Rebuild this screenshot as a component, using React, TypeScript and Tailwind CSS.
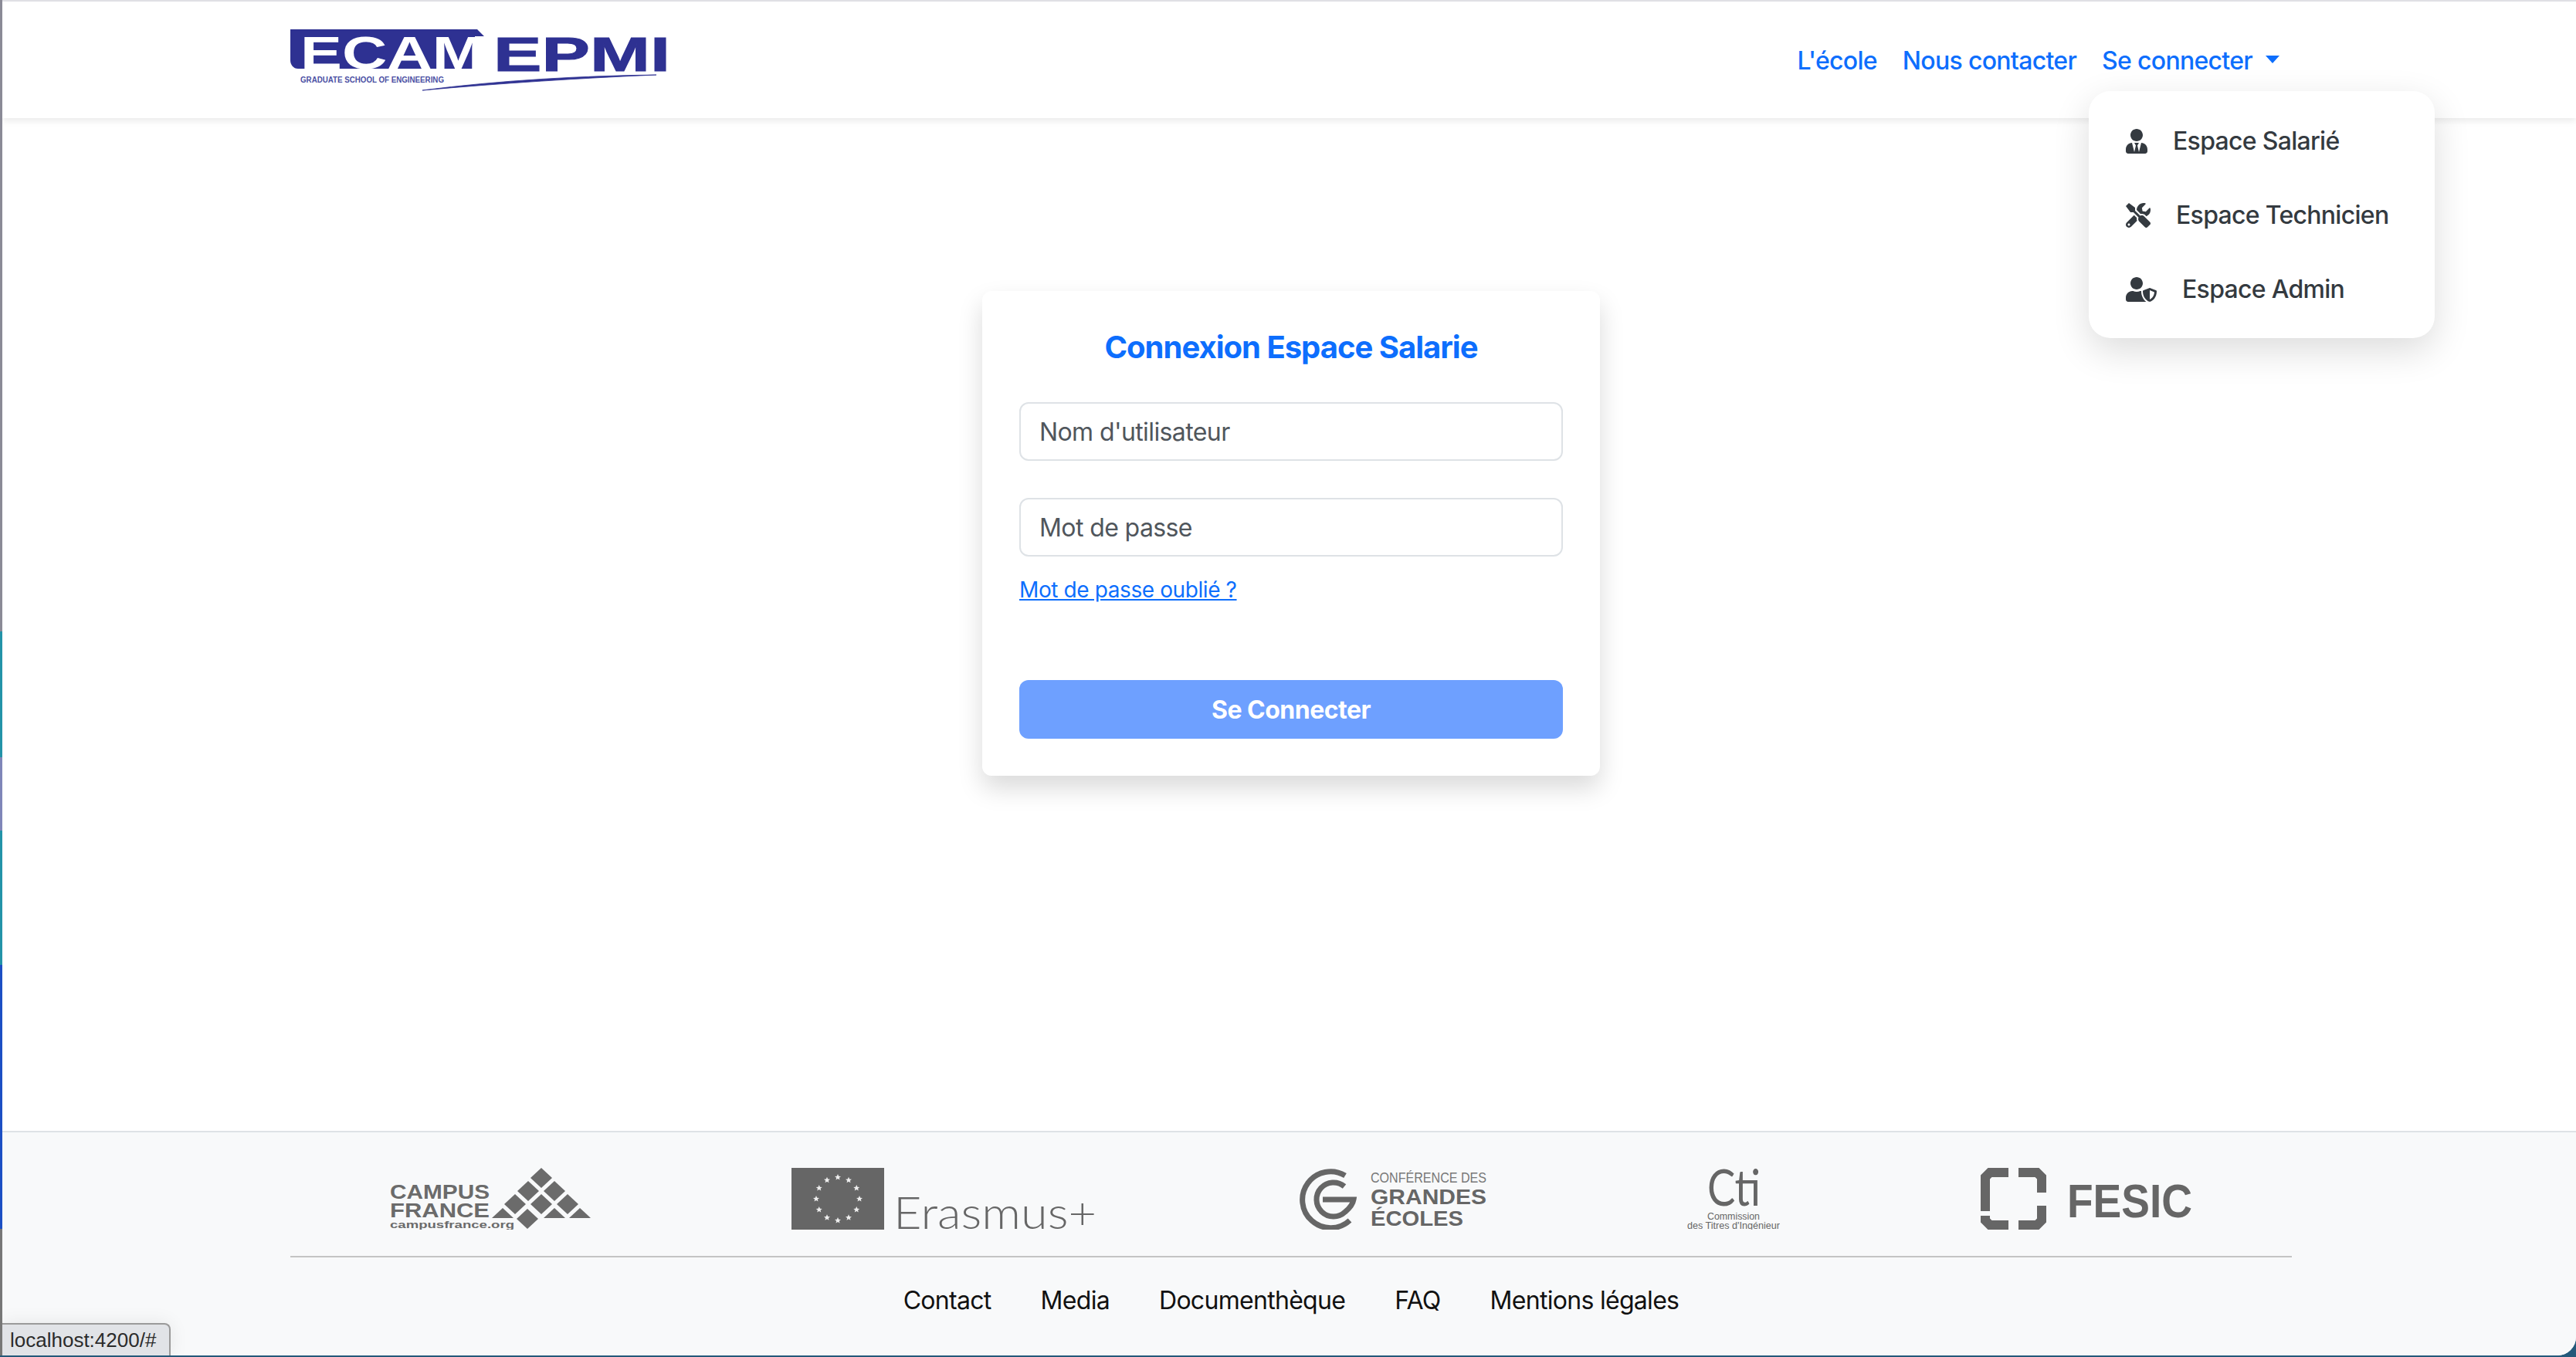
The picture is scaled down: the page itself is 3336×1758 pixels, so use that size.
import { FaTools, FaUserShield, FaUserTie } from 'react-icons/fa';

const menuItems = [
  { label: 'Espace Salarié', Icon: FaUserTie, iconClass: 'h-[32px] w-[28px]' },
  { label: 'Espace Technicien', Icon: FaTools, iconClass: 'h-[32px] w-[32px]' },
  { label: 'Espace Admin', Icon: FaUserShield, iconClass: 'h-[32px] w-[40px]' },
];

const footerLinks = ['Contact', 'Media', 'Documenthèque', 'FAQ', 'Mentions légales'];

function EcamLogo() {
  return (
    <svg width="490" height="82" viewBox="0 0 490 82" aria-label="ECAM EPMI">
      <path d="M0 0H242L251 9H239V51H10C4 51 0 46 0 40Z" fill="#2e3192" />
      <text x="13" y="51" fontFamily="Liberation Sans" fontWeight="700" fontSize="60" fill="#fff" textLength="238" lengthAdjust="spacingAndGlyphs">ECAM</text>
      <text x="263" y="54" fontFamily="Liberation Sans" fontWeight="700" fontSize="63" fill="#2e3192" stroke="#2e3192" strokeWidth="1" textLength="229" lengthAdjust="spacingAndGlyphs">EPMI</text>
      <text x="13" y="69" fontFamily="Liberation Sans" fontWeight="700" fontSize="10" fill="#4a4fa3" textLength="186" lengthAdjust="spacingAndGlyphs">GRADUATE SCHOOL OF ENGINEERING</text>
      <path d="M171 79C270 66 380 60 474 59C380 63 270 70 171 79Z" fill="#2e3192" stroke="#2e3192" strokeWidth="0.8" />
    </svg>
  );
}

function CampusFranceLogo() {
  const diamonds = [[196, 13], [179, 30], [213, 30], [162, 47], [196, 47], [230, 47], [178, 66]];
  const triangles = [[146, 52], [213, 52], [246, 52]];
  return (
    <svg width="260" height="80" viewBox="0 0 260 80" aria-label="Campus France">
      <text x="0" y="40" fontFamily="Liberation Sans" fontWeight="700" fontSize="25" fill="#6b6b6b" textLength="129" lengthAdjust="spacingAndGlyphs">CAMPUS</text>
      <text x="0" y="64" fontFamily="Liberation Sans" fontWeight="700" fontSize="25" fill="#6b6b6b" textLength="129" lengthAdjust="spacingAndGlyphs">FRANCE</text>
      <text x="0" y="78" fontFamily="Liberation Sans" fontWeight="700" fontSize="13" fill="#6b6b6b" textLength="161" lengthAdjust="spacingAndGlyphs">campusfrance.org</text>
      {diamonds.map(([x, y]) => (
        <path key={`${x}-${y}`} d={`M${x} ${y - 13}L${x + 14} ${y}L${x} ${y + 13}L${x - 14} ${y}Z`} fill="#6b6b6b" />
      ))}
      {triangles.map(([x, y]) => (
        <path key={`${x}-${y}`} d={`M${x} ${y}L${x + 14} ${y + 13}H${x - 14}Z`} fill="#6b6b6b" />
      ))}
    </svg>
  );
}

function ErasmusLogo() {
  const stars = Array.from({ length: 12 }, (_, i) => {
    const a = (i * Math.PI) / 6;
    return [60 + 28 * Math.sin(a), 40 - 28 * Math.cos(a)];
  });
  return (
    <svg width="395" height="80" viewBox="0 0 395 80" aria-label="Erasmus+">
      <rect width="120" height="80" fill="#666" />
      {stars.map(([x, y], i) => (
        <path
          key={i}
          d={`M${x} ${y - 4}L${x + 1.2} ${y - 1.2}L${x + 4} ${y - 1}L${x + 1.8} ${y + 0.8}L${x + 2.5} ${y + 3.6}L${x} ${y + 2}L${x - 2.5} ${y + 3.6}L${x - 1.8} ${y + 0.8}L${x - 4} ${y - 1}L${x - 1.2} ${y - 1.2}Z`}
          fill="#eee"
        />
      ))}
      <text x="132" y="79" fontFamily="Lato" fontWeight="300" fontSize="58" fill="#666" textLength="263" lengthAdjust="spacingAndGlyphs">Erasmus+</text>
    </svg>
  );
}

function GrandesEcolesLogo() {
  return (
    <svg width="245" height="80" viewBox="0 0 245 80" aria-label="Conférence des Grandes Écoles">
      <g fill="none" stroke="#666" strokeWidth="7">
        <path d="M62 10A36.5 36.5 0 1 0 68 68" />
        <path d="M61 24A22 22 0 1 0 62 57C68 52 72 47 73 41H33" />
      </g>
      <text x="95" y="19" fontFamily="Liberation Sans" fontSize="18" fill="#777" textLength="150" lengthAdjust="spacingAndGlyphs">CONFÉRENCE DES</text>
      <text x="95" y="47" fontFamily="Liberation Sans" fontWeight="700" fontSize="28" fill="#666" textLength="150" lengthAdjust="spacingAndGlyphs">GRANDES</text>
      <text x="95" y="75" fontFamily="Liberation Sans" fontWeight="700" fontSize="28" fill="#666" textLength="120" lengthAdjust="spacingAndGlyphs">ÉCOLES</text>
    </svg>
  );
}

function CtiLogo() {
  return (
    <svg width="120" height="80" viewBox="0 0 120 80" aria-label="Commission des Titres d'Ingénieur">
      <text x="26" y="49" fontFamily="Lato" fontWeight="400" fontSize="66" fill="#666" textLength="69" lengthAdjust="spacingAndGlyphs">Cti</text>
      <text x="60" y="67" textAnchor="middle" fontFamily="Liberation Sans" fontSize="12" fill="#666" textLength="68" lengthAdjust="spacingAndGlyphs">Commission</text>
      <text x="60" y="79" textAnchor="middle" fontFamily="Liberation Sans" fontSize="12" fill="#666" textLength="120" lengthAdjust="spacingAndGlyphs">des Titres d'Ingénieur</text>
    </svg>
  );
}

function FesicLogo() {
  return (
    <svg width="274" height="80" viewBox="0 0 274 80" aria-label="FESIC">
      <g fill="none" stroke="#666" strokeWidth="12">
        <path d="M36 6H12L6 12V56" />
        <path d="M6 62V68L12 74H36" />
        <path d="M49 6H73L79 12V32" />
        <path d="M79 49V68L73 74H49" />
      </g>
      <text x="112" y="64" fontFamily="Liberation Sans" fontWeight="700" fontSize="62" fill="#666" textLength="162" lengthAdjust="spacingAndGlyphs">FESIC</text>
    </svg>
  );
}

export default function App() {
  return (
    <div className="flex min-h-screen w-full flex-col overflow-hidden bg-[#24597a] font-['Inter',sans-serif]">
      <div className="flex flex-1">
        <div className="w-[3px] shrink-0 bg-[linear-gradient(to_bottom,#8a8a96_0,#8a8a96_818px,#2393a8_818px,#2393a8_981px,#7f86b8_981px,#7f86b8_1076px,#2393a8_1076px,#2393a8_1250px,#1c4fc4_1250px,#1c4fc4_1592px,#777_1592px,#777_100%)]" />
        <div className="relative flex flex-1 flex-col overflow-hidden rounded-br-[24px] bg-white">
          <div className="h-[2px] bg-[#e1e1e6]" />

          <header className="relative z-10 flex h-[151px] bg-white shadow-[0_4px_8px_rgba(0,0,0,0.08)]">
            <div className="relative ml-[373px] flex w-[2592px] items-start justify-between pr-4">
              <div className="pt-[36px]">
                <EcamLogo />
              </div>
              <nav className="flex items-center gap-[33px] pt-[56px] text-[32px] leading-[42px] font-medium tracking-[-0.7px] text-[#0d6efd]">
                <a href="#">L'école</a>
                <a href="#">Nous contacter</a>
                <a href="#" className="flex items-center gap-[17px]">
                  Se connecter
                  <span className="mb-[4px] h-0 w-0 border-x-[9px] border-t-[10px] border-x-transparent border-t-[#0d6efd]" />
                </a>
              </nav>
              <div className="absolute top-[116px] -right-[185px] w-[448px] rounded-[28px] bg-white pt-[17px] pb-[15px] shadow-[0_16px_48px_rgba(0,0,0,0.14)]">
                {menuItems.map(({ label, Icon, iconClass }) => (
                  <a key={label} href="#" className="flex h-[96px] items-center gap-[33px] pl-[48px] text-[32px] font-medium tracking-[-0.7px] text-[#343a40]">
                    <Icon className={iconClass} />
                    {label}
                  </a>
                ))}
              </div>
            </div>
          </header>

          <main className="flex flex-1 items-start pt-[224px] pl-[1269px]">
            <form className="flex w-[800px] flex-col rounded-[12px] bg-white px-[48px] pt-[49px] pb-[48px] shadow-[0_16px_32px_rgba(0,0,0,0.15)]">
              <h1 className="mb-[47px] text-center text-[40px] leading-[48px] font-bold tracking-[-1px] text-[#0d6efd]">Connexion Espace Salarie</h1>
              <input
                placeholder="Nom d'utilisateur"
                className="mb-[48px] h-[76px] rounded-[12px] border-2 border-[#dee2e6] px-[24px] text-[32px] tracking-[-0.6px] text-[#212529] placeholder:text-[#50565c]"
              />
              <input
                placeholder="Mot de passe"
                className="h-[76px] rounded-[12px] border-2 border-[#dee2e6] px-[24px] text-[32px] tracking-[-0.6px] text-[#212529] placeholder:text-[#50565c]"
              />
              <a href="#" className="mt-[25px] text-[28px] leading-[36px] tracking-[-0.4px] text-[#0d6efd] underline">Mot de passe oublié ?</a>
              <button type="button" className="mt-[99px] h-[76px] rounded-[12px] bg-[#6ea0ff] pt-[2px] text-[32px] font-bold tracking-[-0.5px] text-white">Se Connecter</button>
            </form>
          </main>

          <footer className="border-t-2 border-[#dee2e6] bg-[#f8f9fa]">
            <div className="flex justify-center gap-[260px] pt-[46px] pl-[5px]">
              <CampusFranceLogo />
              <ErasmusLogo />
              <GrandesEcolesLogo />
              <CtiLogo />
              <FesicLogo />
            </div>
            <div className="mt-[34px] ml-[373px] w-[2592px] border-t-2 border-[#c4c4c4]" />
            <div className="flex h-[127px] justify-center gap-[64px] pt-[34px] pl-[5px] text-[32px] leading-[44px] tracking-[-0.7px] text-[#111]">
              {footerLinks.map(link => (
                <a key={link} href="#">{link}</a>
              ))}
            </div>
          </footer>

          <div className="absolute bottom-0 left-0 rounded-tr-[8px] border-t-2 border-r-2 border-[#9a9a9a] bg-[#e1e3e7] py-[4px] pr-[17px] pl-[10px] font-['Liberation_Sans',sans-serif] text-[26px] leading-[32px] text-[#2b2b2b] shadow-[0_0_24px_rgba(0,0,0,0.08)]">
            localhost:4200/#
          </div>
        </div>
      </div>
      <div className="h-[2px] shrink-0" />
    </div>
  );
}
